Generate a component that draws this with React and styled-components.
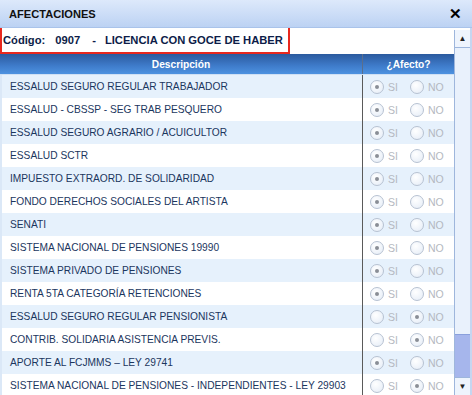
import React from 'react';
import styled, {createGlobalStyle} from 'styled-components';

const GlobalStyle = createGlobalStyle`
    html, body {
        margin: 0;
        padding: 0;
        background: #ffffff;
        font-family: "Liberation Sans", Arial, sans-serif;
    }
`;

const Window = styled.div`
    width: 472px;
    height: 395px;
    overflow: hidden;
    background: #ffffff;
    display: flex;
    flex-direction: column;
    position: relative;
`;

const TitleBar = styled.div`
    height: 27px;
    flex: none;
    display: flex;
    align-items: center;
    justify-content: space-between;
    padding: 0 10px 0 9px;
    background: linear-gradient(#dde9fb, #bcd2f3);
    border-bottom: 1px solid #a9c3ea;
`;

const Title = styled.span`
    font-size: 11.1px;
    font-weight: bold;
    color: #111111;
`;

const Close = styled.span`
    font-size: 15px;
    font-weight: bold;
    color: #000;
    line-height: 1;
`;

const Body = styled.div`
    flex: 1;
    display: flex;
    min-height: 0;
    border-right: 2px solid #c5d6f0;
`;

const Content = styled.div`
    flex: 1;
    display: flex;
    flex-direction: column;
    min-width: 0;
    overflow: hidden;
`;

const CodeBox = styled.div`
    flex: none;
    width: 285px;
    height: 24px;
    margin-top: -2px;
    border: 2px solid #e8281e;
    display: flex;
    align-items: center;
    padding-left: 1px;
    font-size: 11.2px;
    font-weight: bold;
    color: #0d1c48;
    white-space: nowrap;
    position: relative;
    z-index: 1;
`;

const CodePart = styled.span`
    margin-left: ${p => p.$gap || 0}px;
`;

const Table = styled.div`
    flex: none;
    display: flex;
    flex-direction: column;
`;

const Header = styled.div`
    height: 20px;
    flex: none;
    display: grid;
    grid-template-columns: 362px 1fr;
    background: linear-gradient(#2b5a9e, #3f7ccb 60%, #4d92e0);
    border-bottom: 1px solid #cfe0f4;
`;

const HeadCell = styled.div`
    display: flex;
    align-items: center;
    justify-content: center;
    color: #ffffff;
    font-size: 10.2px;
    font-weight: bold;
    border-left: ${p => p.$divider ? '1px solid #5a6e8c' : 'none'};
`;

const Row = styled.div`
    height: 23px;
    flex: none;
    display: grid;
    grid-template-columns: 362px 1fr;
    background: ${p => p.$alt ? '#e6f1fc' : '#ffffff'};
`;

const Desc = styled.div`
    display: flex;
    align-items: center;
    padding-left: 8px;
    font-size: 10.2px;
    color: #1b365e;
    white-space: nowrap;
    border-left: 2px solid #dbe8f7;
`;

const Choice = styled.div`
    display: flex;
    align-items: center;
    padding-left: 7px;
    border-left: 1px solid #5a5a5a;
`;

const Option = styled.label`
    display: flex;
    align-items: center;
    width: 40px;
    font-size: 10.5px;
    color: #b4b8c0;
`;

const Radio = styled.span`
    width: 12px;
    height: 12px;
    border-radius: 50%;
    border: 1px solid #b7c2d2;
    background: radial-gradient(circle at 40% 35%, #ffffff, #e3ebf6);
    margin-right: 4px;
    position: relative;
    flex: none;

    &::after {
        content: '';
        display: ${p => p.$checked ? 'block' : 'none'};
        position: absolute;
        left: 4px;
        top: 4px;
        width: 4px;
        height: 4px;
        border-radius: 50%;
        background: #8a8e96;
    }
`;

const Scrollbar = styled.div`
    width: 15px;
    flex: none;
    margin-top: 2px;
    display: flex;
    flex-direction: column;
    background: #e9f1fc;
    border-left: 1px solid #9eb6dc;
`;

const ScrollButton = styled.div`
    height: 17px;
    flex: none;
    display: flex;
    align-items: center;
    justify-content: center;
    background: #eef4fd;
    border-bottom: ${p => p.$top ? '1px solid #9eb6dc' : 'none'};
    border-top: ${p => p.$top ? 'none' : '1px solid #9eb6dc'};
    font-size: 8px;
    color: #222;
`;

const Track = styled.div`
    flex: 1;
    display: flex;
    flex-direction: column;
    justify-content: flex-end;
`;

const Thumb = styled.div`
    height: 42px;
    background: #a6b6ec;
    border-top: 1px solid #8aa0dc;
`;

const rows = [
    ['ESSALUD SEGURO REGULAR TRABAJADOR', true],
    ['ESSALUD - CBSSP - SEG TRAB PESQUERO', true],
    ['ESSALUD SEGURO AGRARIO / ACUICULTOR', true],
    ['ESSALUD SCTR', true],
    ['IMPUESTO EXTRAORD. DE SOLIDARIDAD', true],
    ['FONDO DERECHOS SOCIALES DEL ARTISTA', true],
    ['SENATI', true],
    ['SISTEMA NACIONAL DE PENSIONES 19990', true],
    ['SISTEMA PRIVADO DE PENSIONES', true],
    ['RENTA 5TA CATEGORÍA RETENCIONES', true],
    ['ESSALUD SEGURO REGULAR PENSIONISTA', false],
    ['CONTRIB. SOLIDARIA ASISTENCIA PREVIS.', false],
    ['APORTE AL FCJMMS \u2013 LEY 29741', true],
    ['SISTEMA NACIONAL DE PENSIONES - INDEPENDIENTES - LEY 29903', false],
];

function App() {
    return (
        <>
            <GlobalStyle/>
            <Window>
                <TitleBar>
                    <Title>AFECTACIONES</Title>
                    <Close>✕</Close>
                </TitleBar>
                <Body>
                    <Content>
                        <CodeBox>
                            <CodePart>Código:</CodePart>
                            <CodePart $gap={10}>0907</CodePart>
                            <CodePart $gap={12}>-</CodePart>
                            <CodePart $gap={9}>LICENCIA CON GOCE DE HABER</CodePart>
                        </CodeBox>
                        <Table>
                            <Header>
                                <HeadCell>Descripción</HeadCell>
                                <HeadCell $divider>¿Afecto?</HeadCell>
                            </Header>
                            {rows.map(([name, si], i) => (
                                <Row key={name} $alt={i % 2 === 0}>
                                    <Desc>{name}</Desc>
                                    <Choice>
                                        <Option><Radio $checked={si}/>SI</Option>
                                        <Option><Radio $checked={!si}/>NO</Option>
                                    </Choice>
                                </Row>
                            ))}
                        </Table>
                    </Content>
                    <Scrollbar>
                        <ScrollButton $top>▲</ScrollButton>
                        <Track>
                            <Thumb/>
                        </Track>
                        <ScrollButton>▼</ScrollButton>
                    </Scrollbar>
                </Body>
            </Window>
        </>
    );
}

export default App;
